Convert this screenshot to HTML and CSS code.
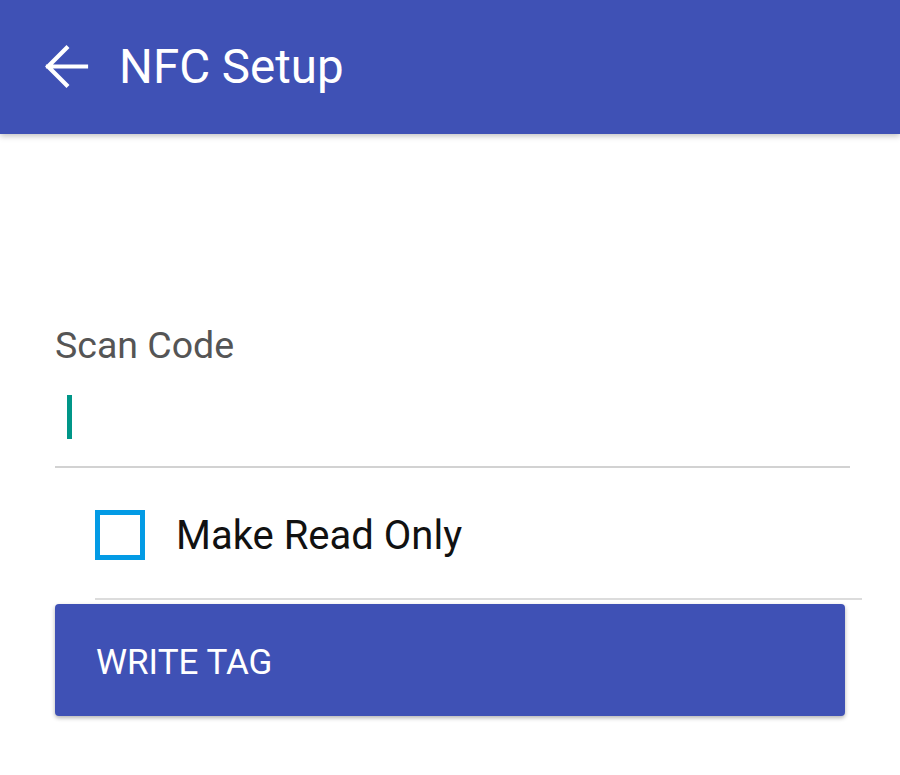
FILE: index.html
```html
<!DOCTYPE html>
<html>
<head>
<meta charset="utf-8">
<link rel="stylesheet" href="styles.css">
</head>
<body>
<header class="appbar">
  <svg class="back" width="46" height="44" viewBox="0 0 46 44"><path fill="none" stroke="#fff" stroke-width="4.2" stroke-linecap="square" d="M4 21.5H42M22.5 3L4 21.5L22.5 40"/></svg>
  <h1 class="title">NFC Setup</h1>
</header>
<main class="content">
  <div class="field">
    <label class="label">Scan Code</label>
    <div class="input"><span class="cursor"></span></div>
  </div>
  <div class="check-row">
    <span class="box"></span>
    <span class="check-label">Make Read Only</span>
  </div>
  <button class="btn">WRITE TAG</button>
</main>
</body>
</html>
```
FILE: styles.css
```css
html, body { margin: 0; padding: 0; background: #fff; }
body { font-family: Roboto, "Noto Sans", sans-serif; width: 900px; height: 775px; overflow: hidden; }
.appbar {
  height: 134px;
  background: #3F51B5;
  display: flex;
  align-items: center;
  padding-left: 44px;
  box-shadow: 0 2px 6px rgba(0,0,0,0.25);
  position: relative;
  z-index: 1;
}
.back { display: block; margin-top: -1px; }
.title {
  margin: 2px 0 0 29px;
  color: #fff;
  font-weight: 400;
  font-size: 47.5px;
  line-height: 1;
}
.content { padding: 0 50px 0 55px; }
.field { padding-top: 193px; }
.label { display: block; font-size: 37.5px; color: #555; line-height: 1; }
.input {
  height: 103px;
  border-bottom: 2px solid #d2d2d2;
  box-sizing: border-box;
  padding-top: 30px;
  padding-left: 12px;
}
.cursor { display: block; width: 5px; height: 44px; background: #009688; }
.check-row {
  margin-left: 40px;
  margin-right: -12px;
  height: 132px;
  padding-top: 4px;
  display: flex;
  align-items: center;
  border-bottom: 2px solid #dcdcdc;
  box-sizing: border-box;
}
.box { width: 50px; height: 50px; box-sizing: border-box; border: 5px solid #039BE5; }
.check-label { margin-left: 31px; font-size: 40px; color: #111; line-height: 1; margin-top: 2px; }
.btn {
  display: block;
  margin-top: 4px;
  width: 790px;
  height: 112px;
  background: #3F51B5;
  color: #fff;
  border: none;
  border-radius: 4px;
  box-shadow: 0 2px 4px rgba(0,0,0,0.3);
  font-family: Roboto, sans-serif;
  font-size: 35px;
  text-align: left;
  padding: 6px 0 0 41px;
}
```
